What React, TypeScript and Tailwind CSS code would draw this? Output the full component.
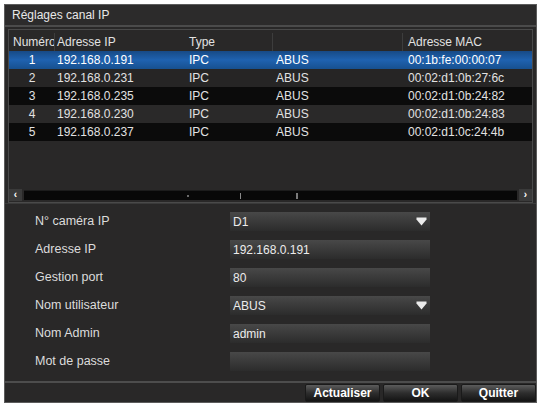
const rows = [
  { n: "1", ip: "192.168.0.191", type: "IPC", vendor: "ABUS", mac: "00:1b:fe:00:00:07" },
  { n: "2", ip: "192.168.0.231", type: "IPC", vendor: "ABUS", mac: "00:02:d1:0b:27:6c" },
  { n: "3", ip: "192.168.0.235", type: "IPC", vendor: "ABUS", mac: "00:02:d1:0b:24:82" },
  { n: "4", ip: "192.168.0.230", type: "IPC", vendor: "ABUS", mac: "00:02:d1:0b:24:83" },
  { n: "5", ip: "192.168.0.237", type: "IPC", vendor: "ABUS", mac: "00:02:d1:0c:24:4b" },
]

const rowBg = [
  "bg-gradient-to-b from-[#174a86] via-[#1f62b0] to-[#17508f] text-white",
  "bg-[#262525] text-[#e2e2e2]",
  "bg-[#0b0b0b] text-[#e2e2e2]",
  "bg-[#2a2929] text-[#e2e2e2]",
  "bg-[#0b0b0b] text-[#e2e2e2]",
]

const fields = [
  { label: "N° caméra IP", value: "D1", select: true },
  { label: "Adresse IP", value: "192.168.0.191" },
  { label: "Gestion port", value: "80" },
  { label: "Nom utilisateur", value: "ABUS", select: true },
  { label: "Nom Admin", value: "admin" },
  { label: "Mot de passe", value: "" },
]

function Arrow() {
  return (
    <svg width="11" height="9" viewBox="0 0 11 9" className="absolute right-[3px] top-[5px]">
      <path d="M0.5 0.5 H10.5 V2.5 L5.5 8.5 L0.5 2.5 Z" fill="#ececec" />
    </svg>
  )
}

export default function App() {
  return (
    <div
      className="w-[537px] h-[403px] bg-white pt-[4px] pl-[4px] overflow-hidden"
      style={{ fontFamily: '"Liberation Sans", Arial, sans-serif' }}
    >
      <div className="w-[533px] h-[399px] bg-[#292828] border border-[#5c5c5c] flex flex-col">
        {/* title */}
        <div className="h-[22px] shrink-0 flex items-center pl-[7px] text-[12px] text-[#e8e8e8] bg-[#2c2b2b] border-b-2 border-[#4b4b4b]">
          Réglages canal IP
        </div>

        {/* list */}
        <div className="mx-[3px] mt-[2px] h-[174px] shrink-0 border border-[#4a4a4a] flex flex-col pt-[3px]">
          <div className="h-[18px] flex items-center text-[12px] text-[#e2e2e2]">
            <div className="w-[46px] pl-[4px] overflow-hidden whitespace-nowrap border-r border-[#3d3d3d]">Numéro</div>
            <div className="w-[130px] pl-[2px] border-r border-transparent">Adresse IP</div>
            <div className="w-[88px] pl-[4px] border-r border-[#3d3d3d]">Type</div>
            <div className="w-[130px] pl-[3px] border-r border-[#3d3d3d]">&nbsp;</div>
            <div className="flex-1 pl-[5px]">Adresse MAC</div>
          </div>
          {rows.map((r, i) => (
            <div key={r.n} className={`h-[18px] flex items-center text-[12px] ${rowBg[i]}`}>
              <div className="w-[46px] text-center">{r.n}</div>
              <div className="w-[130px] pl-[2px]">{r.ip}</div>
              <div className="w-[88px] pl-[4px]">{r.type}</div>
              <div className="w-[130px] pl-[3px]">{r.vendor}</div>
              <div className="flex-1 pl-[5px]">{r.mac}</div>
            </div>
          ))}
          <div className="flex-1" />
          {/* scrollbar */}
          <div className="h-[12px] flex items-center gap-[2px] mb-[1px]">
            <div className="w-[13px] h-[12px] bg-[#3a3a3a] flex items-center justify-center text-[10px] leading-none text-white font-bold">‹</div>
            <div className="relative flex-1 h-[10px] bg-[#080808] border-t border-[#1c1c1c]">
              <div className="absolute left-[163px] top-[4px] w-[2px] h-[2px] bg-[#6a6a6a]" />
              <div className="absolute left-[216px] top-[2px] w-[1px] h-[6px] bg-[#8a8a8a]" />
              <div className="absolute left-[272px] top-[2px] w-[2px] h-[6px] bg-[#7a7a7a]" />
            </div>
            <div className="w-[13px] h-[12px] bg-[#3a3a3a] flex items-center justify-center text-[10px] leading-none text-white font-bold">›</div>
          </div>
        </div>

        {/* form */}
        <div className="flex-1 flex flex-col gap-[9px] pt-[8px] border-t border-[#3a3a3a]">
          {fields.map((f) => (
            <div key={f.label} className="h-[19px] flex items-center">
              <div className="w-[225px] pl-[30px] text-[12.5px] text-[#dcdcdc] whitespace-nowrap">{f.label}</div>
              <div className="relative w-[200px] h-[19px] bg-gradient-to-b from-[#484848] to-[#2c2c2c] flex items-center pl-[3px] text-[12px] text-[#ececec]">
                {f.value}
                {f.select && <Arrow />}
              </div>
            </div>
          ))}
        </div>

        {/* buttons */}
        <div className="h-[21px] shrink-0 border-t-2 border-[#4d4d4d] flex justify-end items-start gap-[3px] pt-[1px] pr-[0px]">
          {["Actualiser", "OK", "Quitter"].map((b) => (
            <div
              key={b}
              className="w-[75px] h-[18px] rounded-[2px] bg-gradient-to-b from-[#5c5c5c] via-[#2e2e2e] to-[#141414] border border-[#1a1a1a] flex items-center justify-center text-[12px] text-white font-bold"
            >
              {b}
            </div>
          ))}
        </div>
      </div>
    </div>
  )
}
